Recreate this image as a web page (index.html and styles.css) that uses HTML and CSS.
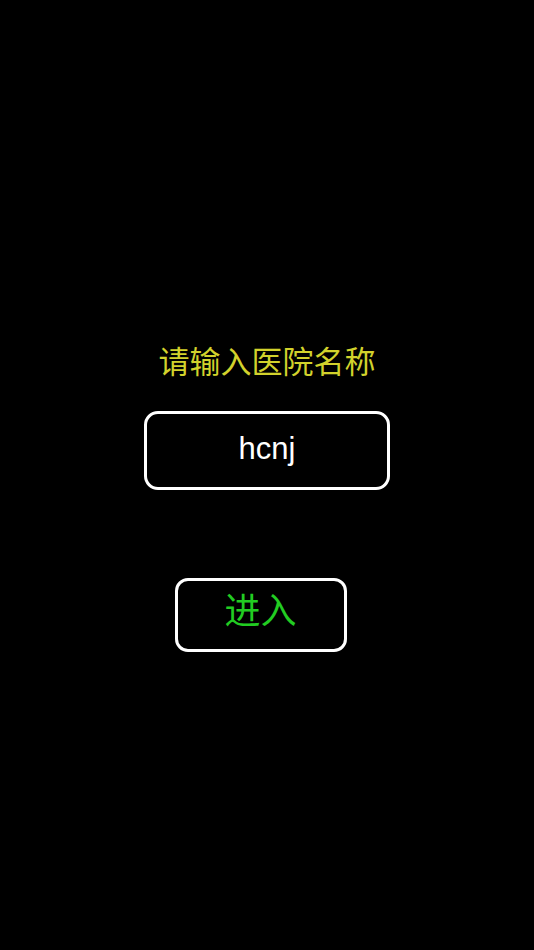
FILE: index.html
```html
<!DOCTYPE html>
<html lang="zh">
<head>
<meta charset="utf-8">
<title>医院登录</title>
<link rel="stylesheet" href="styles.css">
</head>
<body>
<main class="screen">
  <h1 class="prompt">请输入医院名称</h1>
  <div class="field">hcnj</div>
  <button class="enter">进入</button>
</main>
</body>
</html>
```
FILE: styles.css
```css
html, body {
  margin: 0;
  padding: 0;
  background: #000;
  height: 100%;
}

.screen {
  display: flex;
  flex-direction: column;
  align-items: center;
  padding-top: 340px;
  font-family: "Noto Sans CJK SC", "Liberation Sans", sans-serif;
}

.prompt {
  margin: 0;
  font-size: 31px;
  font-weight: normal;
  line-height: 40px;
  color: #d2d22c;
}

.field {
  margin-top: 31px;
  box-sizing: border-box;
  width: 246px;
  height: 79px;
  border: 3px solid #fff;
  border-radius: 14px;
  display: flex;
  align-items: center;
  justify-content: center;
  padding-bottom: 4px;
  font-family: "Liberation Sans", Arial, sans-serif;
  font-size: 31px;
  color: #fff;
}

.enter {
  margin-top: 88px;
  margin-right: 13px;
  box-sizing: border-box;
  width: 172px;
  height: 74px;
  border: 3px solid #fff;
  border-radius: 13px;
  background: #000;
  color: #22cc22;
  font-family: "Noto Sans CJK SC", sans-serif;
  font-size: 36px;
  line-height: 1;
  padding: 0 0 14px;
}
```
